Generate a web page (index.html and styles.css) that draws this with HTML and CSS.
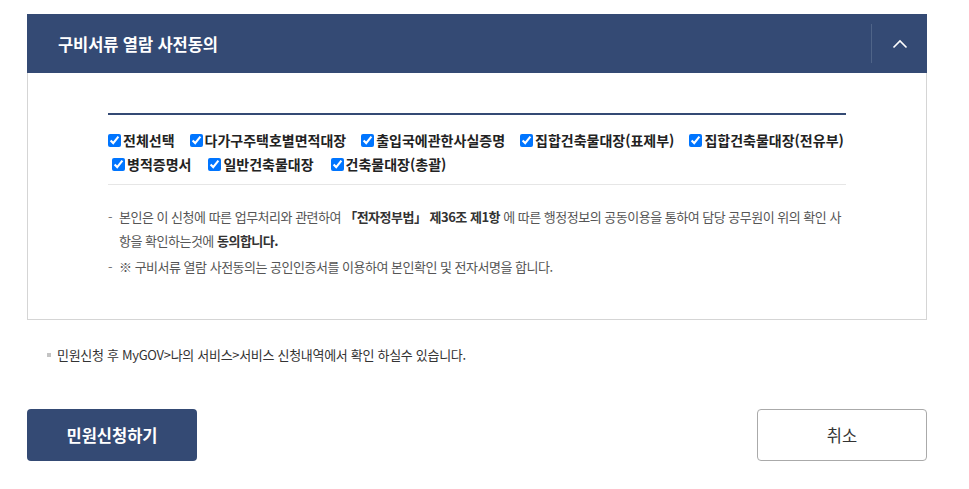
FILE: index.html
```html
<!DOCTYPE html>
<html lang="ko">
<head>
<meta charset="utf-8">
<link rel="stylesheet" href="styles.css">
</head>
<body>
<div class="page">
  <section class="panel">
    <header class="panel-head">
      <h2 class="panel-title">구비서류 열람 사전동의</h2>
      <button class="toggle" type="button" aria-label="접기">
        <svg width="16" height="10" viewBox="0 0 16 10"><polyline points="1.5,8.5 8,2 14.5,8.5" fill="none" stroke="#fff" stroke-width="1.6"/></svg>
      </button>
    </header>
    <div class="panel-body">
      <div class="inner">
        <div class="checks">
          <div class="check-row">
            <label class="chk"><input type="checkbox" checked><span>전체선택</span></label>
            <label class="chk"><input type="checkbox" checked><span>다가구주택호별면적대장</span></label>
            <label class="chk"><input type="checkbox" checked><span>출입국에관한사실증명</span></label>
            <label class="chk"><input type="checkbox" checked><span>집합건축물대장(표제부)</span></label>
            <label class="chk"><input type="checkbox" checked><span>집합건축물대장(전유부)</span></label>
          </div>
          <div class="check-row second">
            <label class="chk"><input type="checkbox" checked><span>병적증명서</span></label>
            <label class="chk"><input type="checkbox" checked><span>일반건축물대장</span></label>
            <label class="chk"><input type="checkbox" checked><span>건축물대장(총괄)</span></label>
          </div>
        </div>
        <ul class="notes">
          <li>본인은 이 신청에 따른 업무처리와 관련하여 <strong>「전자정부법」 제36조 제1항</strong> 에 따른 행정정보의 공동이용을 통하여 담당 공무원이 위의 확인 사항을 확인하는것에 <strong>동의합니다.</strong></li>
          <li>※ 구비서류 열람 사전동의는 공인인증서를 이용하여 본인확인 및 전자서명을 합니다.</li>
        </ul>
      </div>
    </div>
  </section>
  <p class="info">민원신청 후 MyGOV&gt;나의 서비스&gt;서비스 신청내역에서 확인 하실수 있습니다.</p>
  <div class="actions">
    <button class="btn btn-primary" type="button">민원신청하기</button>
    <button class="btn btn-line" type="button">취소</button>
  </div>
</div>
</body>
</html>
```

FILE: styles.css
```css
* { box-sizing: border-box; }
html, body { margin: 0; padding: 0; background: #fff; }
body {
  font-family: "Noto Sans CJK KR", "Noto Sans", sans-serif;
  color: #333;
}
.page {
  width: 900px;
  margin-left: 27px;
  padding-top: 14px;
}
.panel-head {
  height: 59px;
  background: #344a74;
  display: flex;
  align-items: center;
  justify-content: space-between;
  padding-left: 31px;
}
.panel-title {
  margin: 0;
  color: #fff;
  font-size: 16.5px;
  font-weight: 700;
  letter-spacing: -0.1px;
}
.toggle {
  width: 56px;
  height: 39px;
  border: 0;
  border-left: 1px solid #4f6488;
  background: transparent;
  display: flex;
  align-items: center;
  justify-content: center;
  padding: 0;
}
.panel-body {
  border: 1px solid #d5d5d5;
  border-top: 0;
  height: 247px;
  padding: 40px 80px 0 80px;
}
.inner {
  border-top: 2px solid #344a74;
}
.checks {
  padding: 13px 0 8px;
  border-bottom: 1px solid #e6e6e6;
}
.check-row {
  display: flex;
  gap: 15px;
  height: 24px;
  align-items: center;
}
.check-row.second { padding-left: 4px; gap: 17px; }
.chk {
  display: flex;
  align-items: center;
  font-size: 14px;
  font-weight: 700;
  color: #222;
}
.chk input {
  width: 13px;
  height: 13px;
  margin: 0 2px 0 0;
  accent-color: #0075ff;
}
.notes {
  list-style: none;
  margin: 0;
  padding: 20px 0 0;
}
.notes li {
  position: relative;
  padding-left: 11px;
  font-size: 13px;
  line-height: 24px;
  color: #555;
  letter-spacing: -0.5px;
  margin-bottom: 2px;
}
.notes li::before {
  content: "-";
  position: absolute;
  left: 0;
  top: 0;
  color: #777;
}
.notes strong { color: #333; font-weight: 700; }
.info {
  margin: 23px 0 0;
  padding-left: 30px;
  position: relative;
  font-size: 13px;
  color: #333;
  letter-spacing: -0.3px;
  line-height: 24px;
}
.info::before {
  content: "";
  position: absolute;
  left: 20px;
  top: 10px;
  width: 4px;
  height: 4px;
  background: #c4c4c4;
}
.actions {
  display: flex;
  justify-content: space-between;
  margin-top: 42px;
}
.btn {
  width: 170px;
  height: 52px;
  border-radius: 4px;
  font-family: inherit;
  font-size: 16.5px;
  cursor: pointer;
}
.btn-primary {
  background: #344a74;
  border: 0;
  color: #fff;
  font-weight: 700;
}
.btn-line {
  background: #fff;
  border: 1px solid #aaa;
  color: #333;
  font-weight: 400;
}
```
